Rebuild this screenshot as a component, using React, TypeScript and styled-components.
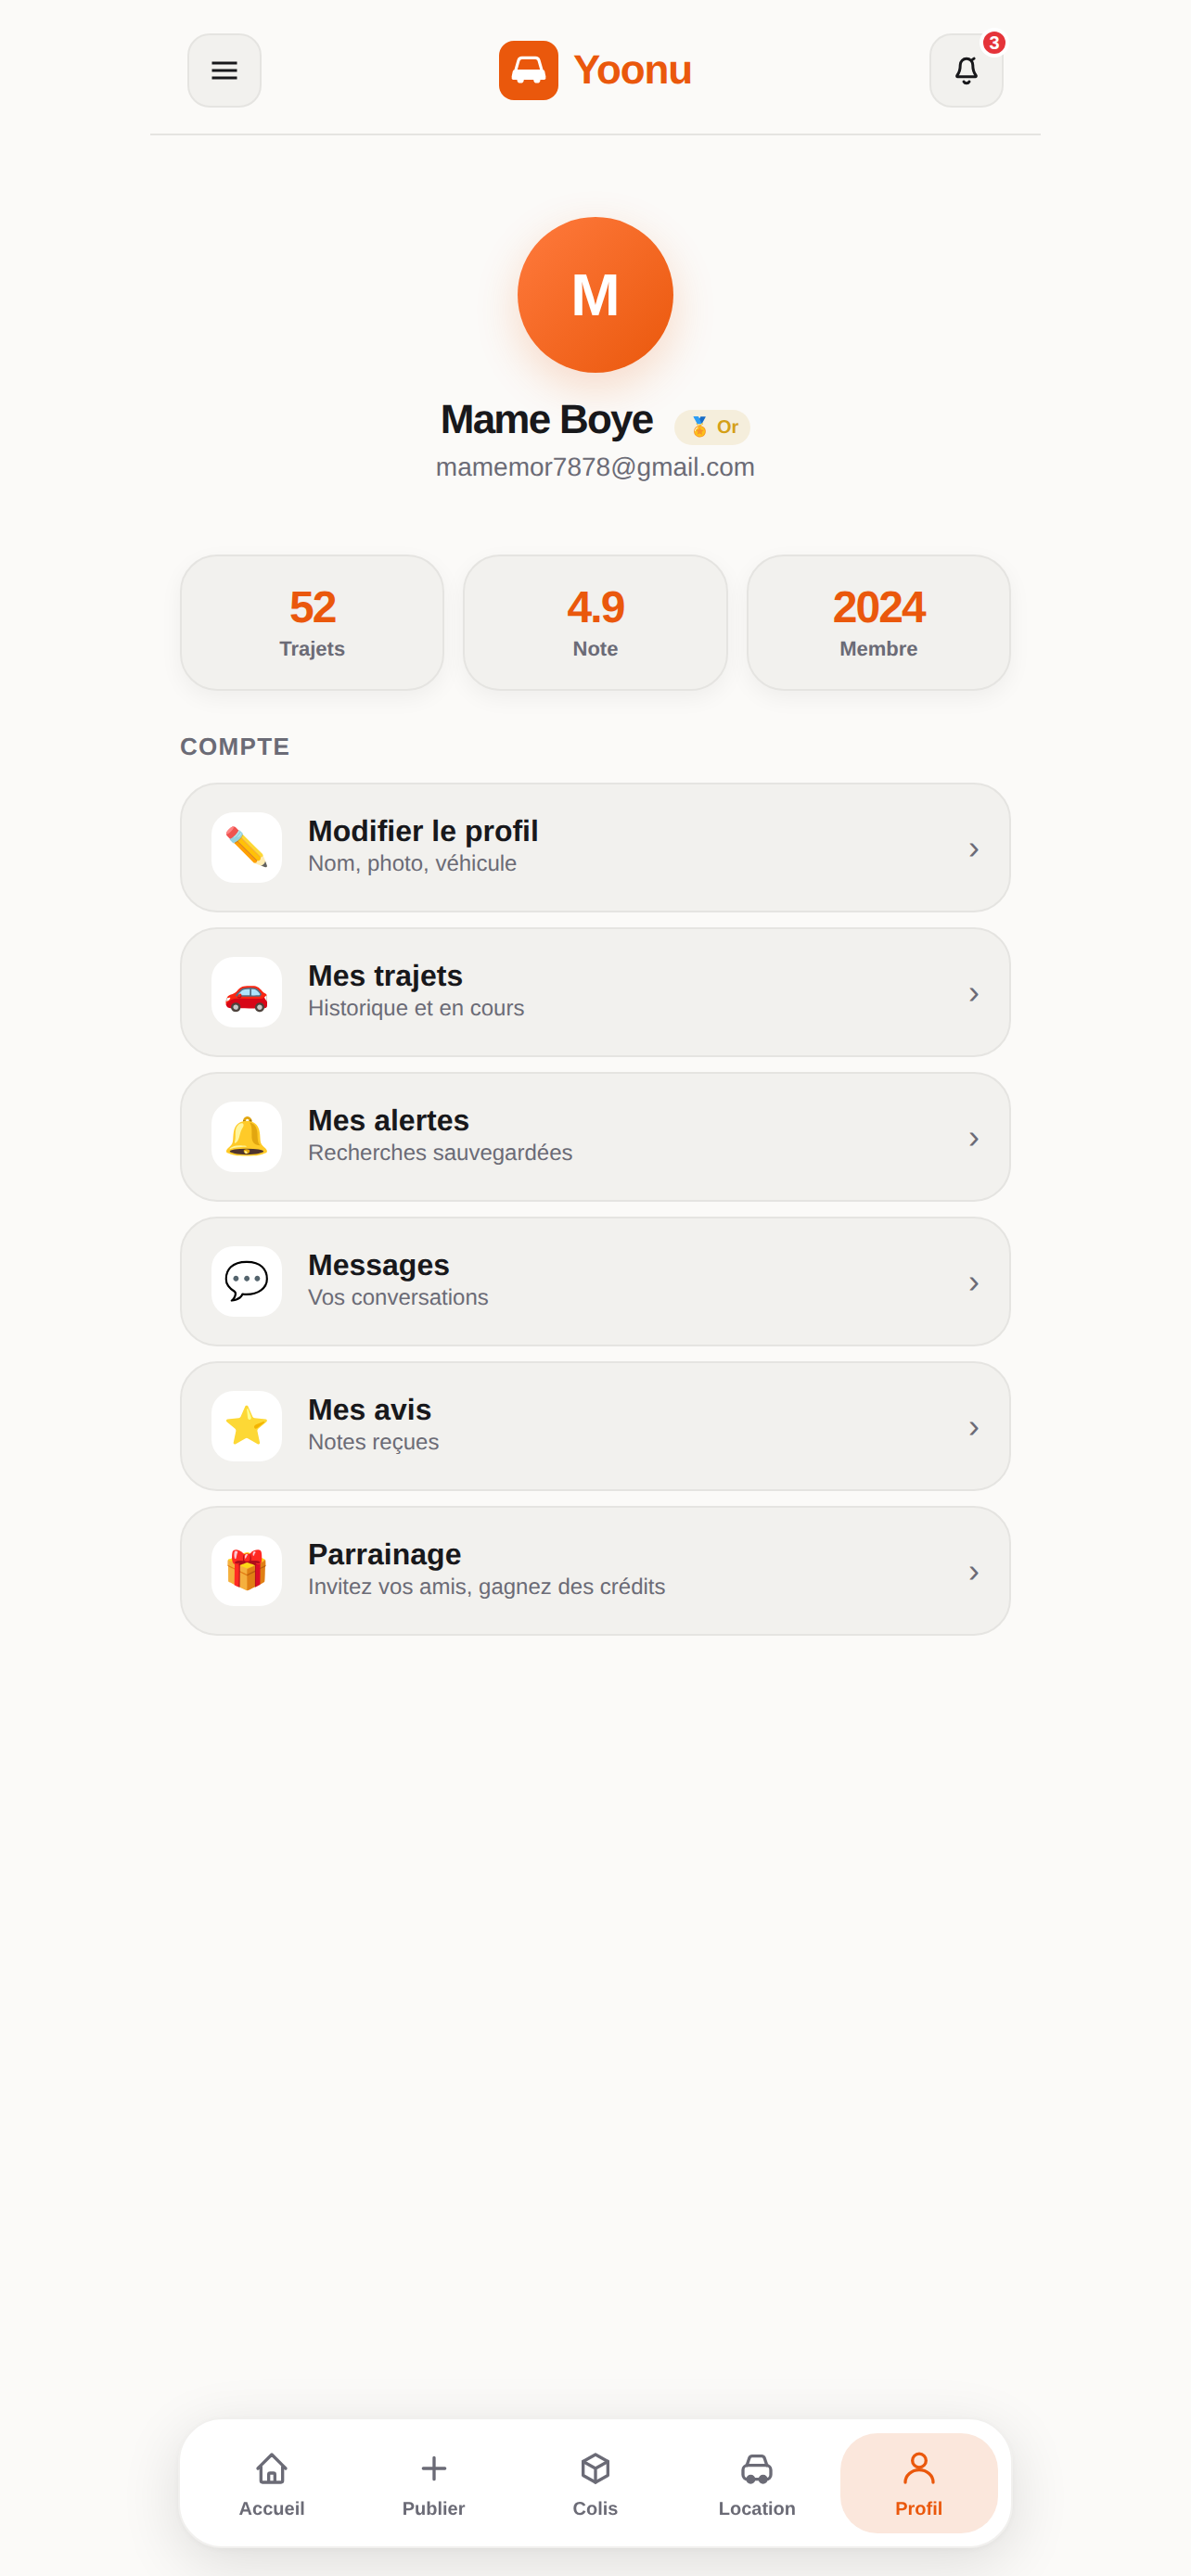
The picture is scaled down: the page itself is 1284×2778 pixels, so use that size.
import React from 'react';
import styled, { createGlobalStyle } from 'styled-components';

const ORANGE = '#ea580c';
const INK = '#18181b';
const MUTED = '#6b6b76';
const LINE = '#e5e4e1';
const PANEL = '#f2f1ee';

const GlobalStyle = createGlobalStyle`
  html, body {
    margin: 0;
    padding: 0;
    background: #fbfaf8;
  }
  * {
    box-sizing: border-box;
  }
  body {
    font-family: 'Liberation Sans', Arial, sans-serif;
    color: ${INK};
    text-rendering: geometricPrecision;
  }
`;

const Page = styled.div`
  width: 960px;
  min-height: 100vh;
  margin: 0 auto;
`;

const Header = styled.header`
  height: 146px;
  padding: 36px 40px 0;
  display: flex;
  justify-content: space-between;
  align-items: flex-start;
  border-bottom: 2px solid ${LINE};
`;

const IconButton = styled.button`
  position: relative;
  width: 80px;
  height: 80px;
  padding: 0;
  display: flex;
  align-items: center;
  justify-content: center;
  background: ${PANEL};
  border: 2px solid ${LINE};
  border-radius: 24px;
  color: ${INK};
`;

const CountBadge = styled.span`
  position: absolute;
  top: -8px;
  right: -8px;
  width: 32px;
  height: 32px;
  display: flex;
  align-items: center;
  justify-content: center;
  background: #e5343a;
  border: 4px solid #fff;
  border-radius: 50%;
  color: #fff;
  font-size: 20px;
  font-weight: 700;
`;

const Brand = styled.div`
  display: flex;
  align-items: center;
  gap: 16px;
  margin-top: 8px;
`;

const BrandMark = styled.div`
  width: 64px;
  height: 64px;
  display: flex;
  align-items: center;
  justify-content: center;
  background: ${ORANGE};
  border-radius: 16px;
`;

const BrandName = styled.span`
  color: ${ORANGE};
  font-size: 44px;
  font-weight: 800;
  letter-spacing: -0.025em;
`;

const Profile = styled.section`
  padding-top: 88px;
  display: flex;
  flex-direction: column;
  align-items: center;
`;

const Avatar = styled.div`
  width: 168px;
  height: 168px;
  display: flex;
  align-items: center;
  justify-content: center;
  border-radius: 50%;
  background: linear-gradient(135deg, #ff7a3d, ${ORANGE});
  box-shadow: 0 16px 48px rgba(234, 88, 12, 0.2);
  color: #fff;
  font-size: 64px;
  font-weight: 700;
`;

const NameRow = styled.div`
  margin-top: 24px;
  display: flex;
  align-items: baseline;
  gap: 24px;
`;

const Name = styled.h1`
  margin: 0;
  font-size: 44px;
  line-height: 54px;
  font-weight: 700;
  letter-spacing: -0.04em;
`;

const Tier = styled.span`
  height: 38px;
  padding: 0 13px 0 15px;
  display: inline-flex;
  align-items: center;
  gap: 4px;
  background: #f5eedc;
  border-radius: 19px;
  color: #d4a017;
  font-size: 20px;
  font-weight: 700;
`;

const Email = styled.div`
  margin-top: 6px;
  color: ${MUTED};
  font-size: 28px;
  line-height: 36px;
`;

const Content = styled.main`
  padding: 0 32px;
`;

const Stats = styled.div`
  margin-top: 76px;
  display: grid;
  grid-template-columns: repeat(3, 1fr);
  gap: 20px;
`;

const StatCard = styled.div`
  height: 147px;
  padding-top: 30px;
  display: flex;
  flex-direction: column;
  align-items: center;
  background: ${PANEL};
  border: 2px solid ${LINE};
  border-radius: 40px;
  box-shadow: 0 8px 24px rgba(0, 0, 0, 0.05);
`;

const StatValue = styled.div`
  color: ${ORANGE};
  font-size: 48px;
  line-height: 52px;
  font-weight: 800;
  letter-spacing: -0.04em;
`;

const StatLabel = styled.div`
  margin-top: 5px;
  color: ${MUTED};
  font-size: 22px;
  line-height: 26px;
  font-weight: 700;
`;

const SectionTitle = styled.h2`
  margin: 44px 0 23px;
  color: ${MUTED};
  font-size: 26px;
  line-height: 32px;
  font-weight: 700;
  letter-spacing: 0.05em;
`;

const MenuList = styled.div`
  display: flex;
  flex-direction: column;
  gap: 16px;
`;

const MenuRow = styled.div`
  height: 140px;
  padding: 0 32px;
  display: flex;
  align-items: center;
  background: ${PANEL};
  border: 2px solid ${LINE};
  border-radius: 40px;
`;

const MenuIcon = styled.div`
  width: 76px;
  height: 76px;
  flex: none;
  display: flex;
  align-items: center;
  justify-content: center;
  background: #fff;
  border-radius: 24px;
  font-size: 40px;
  line-height: 1;
`;

const MenuText = styled.div`
  margin-left: 28px;
  flex: 1;
`;

const MenuTitle = styled.div`
  font-size: 32px;
  line-height: 36px;
  font-weight: 700;
`;

const MenuSub = styled.div`
  color: ${MUTED};
  font-size: 24px;
  line-height: 36px;
`;

const Chevron = styled.span`
  color: ${MUTED};
  font-size: 36px;
  line-height: 1;
`;

const BottomNav = styled.nav`
  position: fixed;
  left: 192px;
  bottom: 30px;
  width: 900px;
  height: 141px;
  padding: 15px 14px 14px;
  display: grid;
  grid-template-columns: repeat(5, 1fr);
  gap: 4px;
  background: #fff;
  border: 2px solid #f1f0ee;
  border-radius: 48px;
  box-shadow: 0 16px 64px rgba(0, 0, 0, 0.12), 0 2px 8px rgba(0, 0, 0, 0.04);
`;

const NavItem = styled.div<{ $active?: boolean }>`
  display: flex;
  flex-direction: column;
  align-items: center;
  padding-top: 18px;
  gap: 10px;
  border-radius: 40px;
  background: ${({ $active }) => ($active ? '#fbe7dc' : 'transparent')};
  color: ${({ $active }) => ($active ? ORANGE : MUTED)};
  font-size: 20px;
  line-height: 28px;
  font-weight: 700;
`;

const Glyph = styled.svg.attrs({
  viewBox: '0 0 24 24',
  fill: 'none',
  stroke: 'currentColor',
  strokeLinecap: 'round',
  strokeLinejoin: 'round',
})`
  display: block;
  flex: none;
`;

const HomeIcon = () => (
  <Glyph width={40} height={40} strokeWidth={2}>
    <path d="M3 12l2-2m0 0l7-7 7 7M5 10v10a1 1 0 0 0 1 1h3m10-11l2 2m-2-2v10a1 1 0 0 1-1 1h-3m-6 0a1 1 0 0 0 1-1v-4a1 1 0 0 1 1-1h2a1 1 0 0 1 1 1v4a1 1 0 0 0 1 1m-6 0h6" />
  </Glyph>
);

const PlusIcon = () => (
  <Glyph width={40} height={40} strokeWidth={2}>
    <path d="M12 5v14M5 12h14" />
  </Glyph>
);

const BoxIcon = () => (
  <Glyph width={40} height={40} strokeWidth={2}>
    <path d="M12 3l8 4.5v9L12 21l-8-4.5v-9z" />
    <path d="M4 7.5l8 4.5 8-4.5M12 12v9" />
  </Glyph>
);

const CarIcon = () => (
  <Glyph width={40} height={40} strokeWidth={2}>
    <path d="M5.5 10L7 5.5Q7.5 4 9 4h6q1.5 0 2 1.5l1.5 4.5" />
    <rect x="3" y="10" width="18" height="9" rx="3" />
    <circle cx="8" cy="19" r="2" fill="currentColor" />
    <circle cx="16" cy="19" r="2" fill="currentColor" />
  </Glyph>
);

const UserIcon = () => (
  <Glyph width={40} height={40} strokeWidth={2}>
    <circle cx="12" cy="6.9" r="4.4" />
    <path d="M3 21a9 8 0 0 1 18 0" />
  </Glyph>
);

const MenuGlyph = () => (
  <Glyph width={36} height={36} strokeWidth={2}>
    <path d="M3 6.7h18M3 12h18M3 17.3h18" strokeLinecap="butt" />
  </Glyph>
);

const BellGlyph = () => (
  <Glyph width={36} height={36} strokeWidth={2}>
    <path d="M7.5 8a4.5 4.5 0 0 1 9 0c0 4 1 6 2.3 7.6.3.4 0 .9-.4.9H5.6c-.5 0-.7-.5-.4-.9C6.5 14 7.5 12 7.5 8z" />
    <path d="M10 20a2.3 2.3 0 0 0 4 0M16 4.4l1.4-1" />
  </Glyph>
);

// white car of the logo: outlined cabin over a solid body with two wheel bumps
const BrandCar = () => (
  <svg width="46" height="38" viewBox="0 0 44 36">
    <path
      d="M8.5 18L11.5 7.5Q12.3 5 15 5h14q2.7 0 3.5 2.5L35.5 18"
      fill="none"
      stroke="#fff"
      strokeWidth="3"
    />
    <path
      d="M8 17h28q2 0 2.5 2l1 5v2q0 1.5-1.5 1.5H6q-1.5 0-1.5-1.5v-2l1-5q.5-2 2.500-2z"
      fill="#fff"
    />
    <circle cx="13.500" cy="27.500" r="3.500" fill="#fff" />
    <circle cx="30.500" cy="27.500" r="3.500" fill="#fff" />
  </svg>
);

const stats = [
  { value: '52', label: 'Trajets' },
  { value: '4.9', label: 'Note' },
  { value: '2024', label: 'Membre' },
];

const menu = [
  { icon: '✏️', title: 'Modifier le profil', sub: 'Nom, photo, véhicule' },
  { icon: '🚗', title: 'Mes trajets', sub: 'Historique et en cours' },
  { icon: '🔔', title: 'Mes alertes', sub: 'Recherches sauvegardées' },
  { icon: '💬', title: 'Messages', sub: 'Vos conversations' },
  { icon: '⭐', title: 'Mes avis', sub: 'Notes reçues' },
  { icon: '🎁', title: 'Parrainage', sub: 'Invitez vos amis, gagnez des crédits' },
];

const tabs = [
  { label: 'Accueil', icon: <HomeIcon /> },
  { label: 'Publier', icon: <PlusIcon /> },
  { label: 'Colis', icon: <BoxIcon /> },
  { label: 'Location', icon: <CarIcon /> },
  { label: 'Profil', icon: <UserIcon />, active: true },
];

export default function App() {
  return (
    <>
      <GlobalStyle />
      <Page>
        <Header>
          <IconButton aria-label="Menu">
            <MenuGlyph />
          </IconButton>
          <Brand>
            <BrandMark>
              <BrandCar />
            </BrandMark>
            <BrandName>Yoonu</BrandName>
          </Brand>
          <IconButton aria-label="Notifications">
            <BellGlyph />
            <CountBadge>3</CountBadge>
          </IconButton>
        </Header>
        <Profile>
          <Avatar>M</Avatar>
          <NameRow>
            <Name>Mame Boye</Name>
            <Tier>🏅 Or</Tier>
          </NameRow>
          <Email>mamemor7878@gmail.com</Email>
        </Profile>
        <Content>
          <Stats>
            {stats.map((s) => (
              <StatCard key={s.label}>
                <StatValue>{s.value}</StatValue>
                <StatLabel>{s.label}</StatLabel>
              </StatCard>
            ))}
          </Stats>
          <SectionTitle>COMPTE</SectionTitle>
          <MenuList>
            {menu.map((item) => (
              <MenuRow key={item.title}>
                <MenuIcon>{item.icon}</MenuIcon>
                <MenuText>
                  <MenuTitle>{item.title}</MenuTitle>
                  <MenuSub>{item.sub}</MenuSub>
                </MenuText>
                <Chevron>›</Chevron>
              </MenuRow>
            ))}
          </MenuList>
        </Content>
      </Page>
      <BottomNav>
        {tabs.map((t) => (
          <NavItem key={t.label} $active={t.active}>
            {t.icon}
            {t.label}
          </NavItem>
        ))}
      </BottomNav>
    </>
  );
}
